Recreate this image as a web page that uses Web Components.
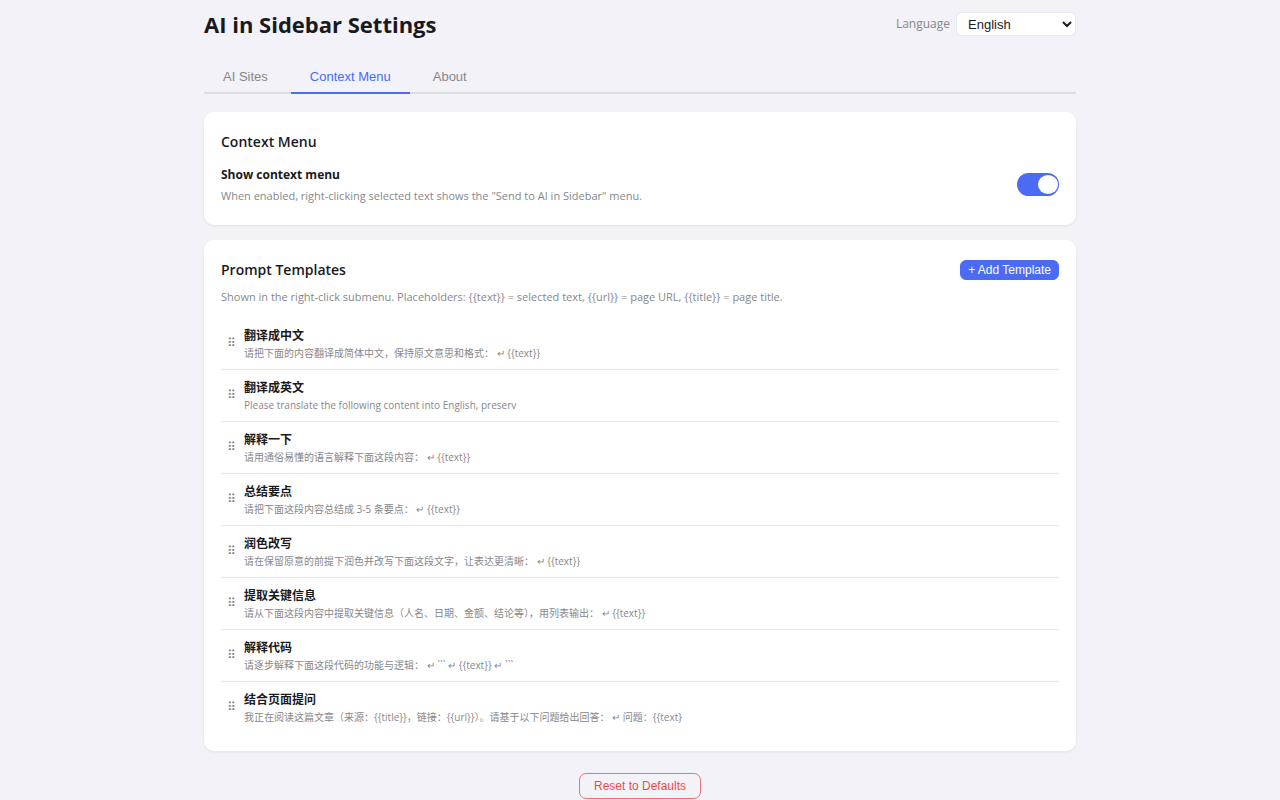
<!DOCTYPE html>
<html lang="en">
<head>
<meta charset="utf-8">
<meta name="viewport" content="width=device-width, initial-scale=1">
<title>AI in Sidebar Settings</title>
<style>
  body {
    margin: 0;
    background: #f2f2f8;
    color: #1a1a1e;
    font-family: "Open Sans", "Noto Sans CJK SC", sans-serif;
    --accent: #4b6bf5;
    --muted: #87878c;
    --line: #e8e8eb;
    --control-font: "Liberation Sans", Arial, sans-serif;
  }
</style>
</head>
<body>
<settings-page></settings-page>

<script>
const define = (name, html, setup) => {
  const template = document.createElement('template');
  template.innerHTML = html;
  customElements.define(name, class extends HTMLElement {
    constructor() {
      super();
      this.attachShadow({ mode: 'open' }).append(template.content.cloneNode(true));
    }
    connectedCallback() {
      if (setup) setup(this, this.shadowRoot);
    }
  });
};

define('page-header', `
  <style>
    :host { display: flex; align-items: center; justify-content: space-between; height: 48px; }
    h1 { margin: 0; font-size: 22px; line-height: 32px; font-weight: 700; }
    div { display: flex; align-items: center; gap: 6px; }
    label { font-size: 12px; line-height: 16px; color: var(--muted); }
    select {
      width: 120px; height: 24px; box-sizing: border-box; padding: 0 0 0 7px;
      border: 1px solid #e8e8ee; border-radius: 6px; background: #fff; color: #1a1a1e;
      font: 13px var(--control-font);
    }
  </style>
  <h1><slot></slot></h1>
  <div>
    <label for="lang">Language</label>
    <select id="lang"><option>English</option></select>
  </div>`);

define('tab-bar', `
  <style>
    :host { display: flex; gap: 4px; margin-top: 12px; border-bottom: 2px solid #dddde4; }
  </style>
  <slot></slot>`);

define('tab-item', `
  <style>
    :host { display: block; margin-bottom: -2px; }
    button {
      display: block; height: 34px; padding: 1px 19px 0; border: 0; border-bottom: 2px solid transparent;
      background: none; color: var(--muted); font: 13px/16px var(--control-font);
    }
    :host([selected]) button { color: var(--accent); border-color: var(--accent); }
  </style>
  <button type="button"><slot></slot></button>`);

define('settings-card', `
  <style>
    :host {
      display: block; padding: 20px 17px 18px; background: #fff; border-radius: 10px;
      box-shadow: 0 1px 3px rgba(30, 30, 60, .08);
    }
    header { display: flex; align-items: center; justify-content: space-between; height: 20px; }
    h2 { margin: 0; font-size: 14px; line-height: 20px; font-weight: 600; }
  </style>
  <header><h2></h2><slot name="action"></slot></header>
  <slot></slot>`,
  (host, root) => { root.querySelector('h2').textContent = host.getAttribute('heading'); });

define('toggle-setting', `
  <style>
    :host { display: flex; align-items: center; justify-content: space-between; padding: 13px 0 3px; }
    label { display: block; font-size: 12px; line-height: 20px; font-weight: 700; }
    p { margin: 3px 0 0; font-size: 11px; line-height: 16px; color: var(--muted); }
    input {
      appearance: none; display: flex; justify-content: flex-end; flex: none; box-sizing: border-box;
      width: 42px; height: 23px; margin: 0; padding: 2px 1px; border-radius: 12px; background: var(--accent);
    }
    input::before { content: ""; width: 20px; height: 19px; border-radius: 50%; background: #fff; }
    input:not(:checked) { justify-content: flex-start; background: #ccccd2; }
  </style>
  <div>
    <label for="switch"></label>
    <p id="hint"><slot></slot></p>
  </div>
  <input type="checkbox" role="switch" id="switch" aria-describedby="hint" checked>`,
  (host, root) => { root.querySelector('label').textContent = host.getAttribute('label'); });

define('action-button', `
  <style>
    :host { display: block; }
    button {
      display: block; height: 20px; padding: 0 7px; border: 1px solid var(--accent); border-radius: 6px;
      background: var(--accent); color: #fff; font: 12px/16px var(--control-font);
    }
    :host([danger]) button {
      height: 26px; padding: 0 14px; border-color: #ec7470; background: transparent; color: #ea4d48;
      border-radius: 7px;
    }
  </style>
  <button type="button"><slot></slot></button>`);

define('template-item', `
  <style>
    :host {
      display: flex; align-items: center; gap: 8px; box-sizing: border-box; padding: 10px 0 8px 6px;
      border-bottom: 1px solid var(--line);
    }
    :host(:last-of-type) { border-bottom: 0; }
    span {
      width: 9px; padding-bottom: 4px; font: 12px/16px "DejaVu Sans", sans-serif;
      color: #77777c; text-align: center; cursor: grab;
    }
    h3 { margin: 0; font-size: 12px; line-height: 16px; font-weight: 600; }
    p { margin: 1px 0 0; font-size: 10px; line-height: 16px; color: var(--muted); }
  </style>
  <span aria-hidden="true">⠿</span>
  <div lang="zh-CN"><h3></h3><p><slot></slot></p></div>`,
  (host, root) => { root.querySelector('h3').textContent = host.getAttribute('name'); });

define('settings-page', `
  <style>
    :host { display: block; }
    main { max-width: 872px; margin: 0 auto; }
    .cards { display: grid; gap: 15px; margin-top: 18px; }
    .intro { margin: 9px 0 13px; font-size: 11px; line-height: 16px; color: var(--muted); }
    footer { display: flex; justify-content: center; padding-top: 22px; }
  </style>
  <main>
    <page-header>AI in Sidebar Settings</page-header>
    <tab-bar>
      <tab-item>AI Sites</tab-item>
      <tab-item selected>Context Menu</tab-item>
      <tab-item>About</tab-item>
    </tab-bar>
    <div class="cards">
      <settings-card heading="Context Menu">
        <toggle-setting label="Show context menu">When enabled, right-clicking selected text shows the "Send to AI in Sidebar" menu.</toggle-setting>
      </settings-card>
      <settings-card heading="Prompt Templates">
        <action-button slot="action">+ Add Template</action-button>
        <p class="intro">Shown in the right-click submenu. Placeholders: {{text}} = selected text, {{url}} = page URL, {{title}} = page title.</p>
        <template-item name="翻译成中文">请把下面的内容翻译成简体中文，保持原文意思和格式： ↵ {{text}}</template-item>
        <template-item name="翻译成英文">Please translate the following content into English, preserv</template-item>
        <template-item name="解释一下">请用通俗易懂的语言解释下面这段内容： ↵ {{text}}</template-item>
        <template-item name="总结要点">请把下面这段内容总结成 3-5 条要点： ↵ {{text}}</template-item>
        <template-item name="润色改写">请在保留原意的前提下润色并改写下面这段文字，让表达更清晰： ↵ {{text}}</template-item>
        <template-item name="提取关键信息">请从下面这段内容中提取关键信息（人名、日期、金额、结论等），用列表输出： ↵ {{text}}</template-item>
        <template-item name="解释代码">请逐步解释下面这段代码的功能与逻辑： ↵ \`\`\` ↵ {{text}} ↵ \`\`\`</template-item>
        <template-item name="结合页面提问">我正在阅读这篇文章（来源：{{title}}，链接：{{url}}）。请基于以下问题给出回答： ↵ 问题：{{text}</template-item>
      </settings-card>
    </div>
    <footer><action-button danger>Reset to Defaults</action-button></footer>
  </main>`);
</script>
</body>
</html>
